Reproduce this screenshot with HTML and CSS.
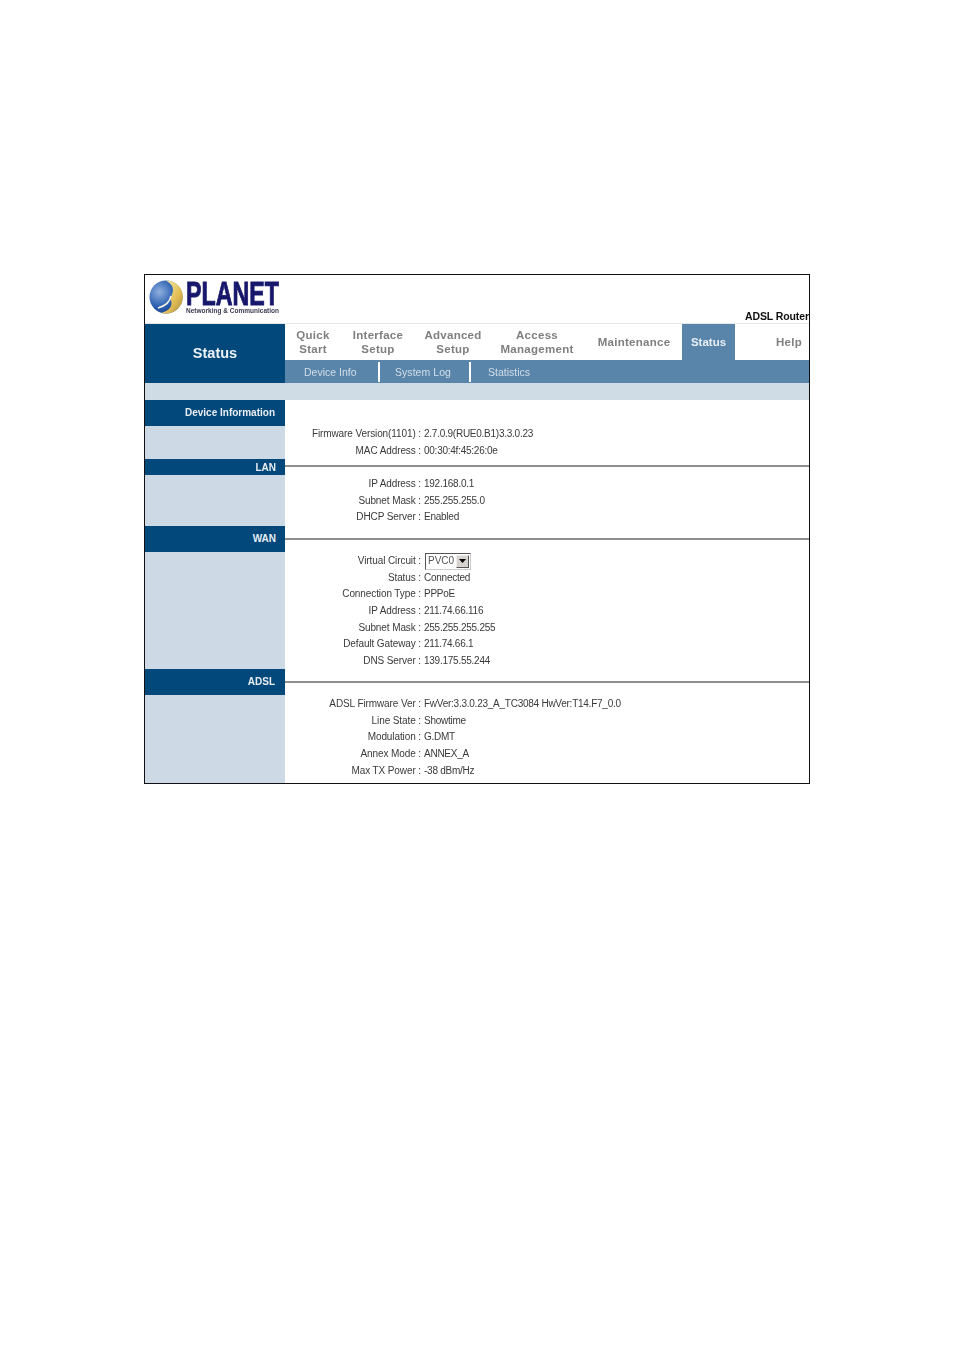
FILE: index.html
```html
<!DOCTYPE html>
<html lang="en">
<head>
<meta charset="utf-8">
<title>ADSL Router Status</title>
<link rel="stylesheet" href="styles.css">
</head>
<body>
<main class="frame">
  <header class="top">
    <svg class="logo" width="180" height="48" viewBox="0 0 180 48" aria-label="PLANET Networking &amp; Communication">
      <defs>
        <radialGradient id="globe" cx="0.3" cy="0.35" r="0.8">
          <stop offset="0" stop-color="#8fb0de"/>
          <stop offset="0.55" stop-color="#2b5fb0"/>
          <stop offset="1" stop-color="#173a80"/>
        </radialGradient>
        <linearGradient id="gold" x1="0" y1="0" x2="1" y2="1">
          <stop offset="0" stop-color="#f6edb0"/>
          <stop offset="0.6" stop-color="#e2bf55"/>
          <stop offset="1" stop-color="#a98a45"/>
        </linearGradient>
      </defs>
      <circle cx="21" cy="22" r="16.5" fill="url(#globe)"/>
      <path d="M21 5.5C31 5.5 38 13 38 22C38 31 30 38.5 21 38.5C19 38.5 17.5 38 17 37.5C24 36 28 31 26 25C25 21 30 17 27 11C26 9 23 7 21 5.5Z" fill="url(#gold)"/>
      <path d="M13 33C20 31 25 27 26 21" fill="none" stroke="#f3f0e0" stroke-width="1.6"/>
      <text x="41" y="30" class="logo-name" textLength="93" lengthAdjust="spacingAndGlyphs">PLANET</text>
      <text x="41" y="37.5" class="logo-tag" textLength="93" lengthAdjust="spacingAndGlyphs">Networking &amp; Communication</text>
    </svg>
    <span class="product">ADSL Router</span>
  </header>

  <div class="masthead">
    <div class="page-title">Status</div>
    <div class="menus">
      <nav class="nav">
        <a class="nav-item">Quick<br>Start</a>
        <a class="nav-item">Interface<br>Setup</a>
        <a class="nav-item">Advanced<br>Setup</a>
        <a class="nav-item">Access<br>Management</a>
        <a class="nav-item maint">Maintenance</a>
        <a class="nav-item active">Status</a>
        <a class="nav-item end">Help</a>
      </nav>
      <nav class="subnav">
        <a class="sub-item first">Device Info</a>
        <a class="sub-item second">System Log</a>
        <a class="sub-item last">Statistics</a>
      </nav>
    </div>
  </div>
  <div class="band"></div>

  <section class="section">
    <div class="side"><h2 class="head tall device">Device Information</h2></div>
    <div class="body first-body">
      <div class="row"><span class="key">Firmware Version(1101) :</span><span class="val">2.7.0.9(RUE0.B1)3.3.0.23</span></div>
      <div class="row"><span class="key">MAC Address :</span><span class="val">00:30:4f:45:26:0e</span></div>
    </div>
  </section>

  <section class="section">
    <div class="side"><h2 class="head short">LAN</h2></div>
    <div class="body ruled lan">
      <div class="row"><span class="key">IP Address :</span><span class="val">192.168.0.1</span></div>
      <div class="row"><span class="key">Subnet Mask :</span><span class="val">255.255.255.0</span></div>
      <div class="row"><span class="key">DHCP Server :</span><span class="val">Enabled</span></div>
    </div>
  </section>

  <section class="section wan">
    <div class="side"><h2 class="head tall">WAN</h2></div>
    <div class="body ruled">
      <div class="row"><span class="key">Virtual Circuit :</span>
        <span class="select"><span class="select-text">PVC0</span><span class="select-btn"><svg width="7" height="4" viewBox="0 0 7 4"><path d="M0 0H7L3.5 4Z" fill="#000"/></svg></span></span>
      </div>
      <div class="row"><span class="key">Status :</span><span class="val">Connected</span></div>
      <div class="row"><span class="key">Connection Type :</span><span class="val">PPPoE</span></div>
      <div class="row"><span class="key">IP Address :</span><span class="val">211.74.66.116</span></div>
      <div class="row"><span class="key">Subnet Mask :</span><span class="val">255.255.255.255</span></div>
      <div class="row"><span class="key">Default Gateway :</span><span class="val">211.74.66.1</span></div>
      <div class="row"><span class="key">DNS Server :</span><span class="val">139.175.55.244</span></div>
    </div>
  </section>

  <section class="section adsl">
    <div class="side"><h2 class="head tall device">ADSL</h2></div>
    <div class="body ruled">
      <div class="row"><span class="key">ADSL Firmware Ver :</span><span class="val">FwVer:3.3.0.23_A_TC3084 HwVer:T14.F7_0.0</span></div>
      <div class="row"><span class="key">Line State :</span><span class="val">Showtime</span></div>
      <div class="row"><span class="key">Modulation :</span><span class="val">G.DMT</span></div>
      <div class="row"><span class="key">Annex Mode :</span><span class="val">ANNEX_A</span></div>
      <div class="row"><span class="key">Max TX Power :</span><span class="val">-38 dBm/Hz</span></div>
    </div>
  </section>
</main>
</body>
</html>
```
FILE: styles.css
```css
* { box-sizing: border-box; }
html, body { margin: 0; background: #fff; }
body { font-family: "Liberation Sans", Arial, sans-serif; height: 1351px; overflow: hidden; }

.frame {
  width: 666px;
  height: 510px;
  margin: 274px 0 0 144px;
  border: 1px solid #111;
  overflow: hidden;
  color: #3a3a3a;
  font-size: 10px;
  display: flex;
  flex-direction: column;
}
.frame > * { filter: blur(0.4px); }

.top { height: 49px; flex: none; position: relative; display: flex; align-items: flex-end; justify-content: flex-end; background: #fff; border-bottom: 1px solid #e4e8ea; }
.logo { position: absolute; left: 0; top: 0; }
.logo-name { font: 700 33px "Liberation Sans", Arial, sans-serif; fill: #17186b; stroke: #17186b; stroke-width: 0.9px; }
.logo-tag { font: 700 6.5px "Liberation Sans", Arial, sans-serif; fill: #3b3b50; }
.product { font-weight: 700; font-size: 10.5px; color: #111; white-space: nowrap; margin-bottom: 1px; letter-spacing: -0.1px; }

.masthead { display: flex; height: 59px; flex: none; }
.page-title { width: 140px; background: #02487a; color: #eef3f7; font-weight: 700; font-size: 14.5px; display: flex; align-items: center; justify-content: center; padding: 0 0 1px 0; }
.menus { flex: 1; display: flex; flex-direction: column; }

.nav { height: 36px; display: grid; grid-template-columns: 56px 74px 76px 92px 99px 53px 74px; }
.nav-item { font-weight: 700; font-size: 11.5px; line-height: 14px; letter-spacing: 0.28px; color: #7f7f7f; text-align: center; display: flex; align-items: center; justify-content: center; }
.nav-item.maint { padding-left: 3px; }
.nav-item.active { background: #5a85aa; color: #e8eff5; letter-spacing: 0; }
.nav-item.end { justify-content: flex-end; padding-right: 7px; }

.subnav { height: 23px; background: #5a85aa; display: flex; align-items: center; color: #d3dfe9; font-size: 10.5px; }
.sub-item { height: 20px; display: flex; align-items: center; }
.sub-item.first { width: 95px; padding-left: 19px; border-right: 2px solid #fff; margin-right: 15px; }
.sub-item.second { width: 76px; border-right: 2px solid #fff; margin-right: 17px; letter-spacing: 0.05px; }

.band { height: 17px; flex: none; background: #cfdbe5; }

.section { display: grid; grid-template-columns: 140px 1fr; flex: none; }
.section.wan { height: 143px; }
.section.adsl { flex: 1; }
.side { background: #cddae5; }
.head { margin: 0; background: #02487a; color: #e8eef3; font-size: 10px; font-weight: 700; padding-right: 9px; display: flex; align-items: center; justify-content: flex-end; }
.head.tall { height: 26px; }
.head.short { height: 16px; padding-top: 1px; }
.head.device { padding: 0 10px 1px 0; }

.body { padding-top: 25.6px; }
.body.ruled { position: relative; padding-top: 27px; }
.body.ruled::before { content: ""; position: absolute; left: 0; right: 0; top: 12px; height: 2px; background: #8f8f8f; }
.body.lan { padding-top: 16.6px; }
.body.lan::before { top: 6.5px; }

.row { height: 16.7px; display: grid; grid-template-columns: 136px 1fr; column-gap: 3px; align-items: center; white-space: nowrap; line-height: 16px; }
.key { text-align: right; letter-spacing: -0.1px; }
.val { letter-spacing: -0.25px; }

.select { display: inline-flex; align-items: center; justify-content: space-between; width: 46px; height: 17px; margin-left: 1px; border: 1px solid; border-color: #555 #ccc #ccc #555; padding: 0 1px 0 2px; background: #fff; color: #555; }
.select-btn { width: 13px; height: 13px; background: #d6d3ce; border: 1px solid; border-color: #eee #555 #555 #eee; display: flex; align-items: center; justify-content: center; }
.select-btn svg { display: block; }
```
